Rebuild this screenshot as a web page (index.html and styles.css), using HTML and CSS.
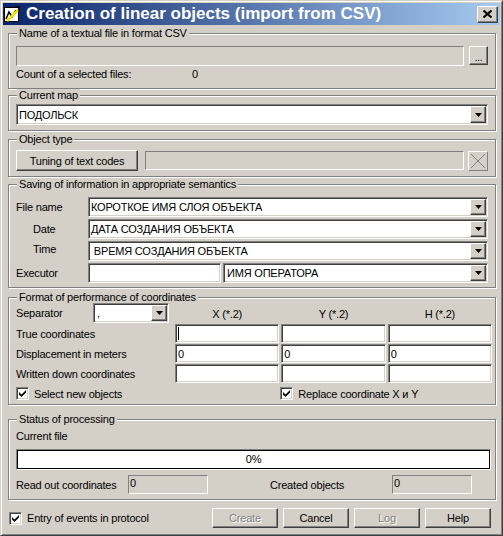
FILE: index.html
```html
<!DOCTYPE html>
<html>
<head>
<meta charset="utf-8">
<link rel="stylesheet" href="styles.css">
</head>
<body>
<div class="window">
  <div class="titlebar">
    <svg class="app-icon" width="16" height="16" viewBox="0 0 16 16">
      <rect x="0.5" y="1.5" width="14" height="14" fill="#fff" stroke="#000"/>
      <path d="M2 13 L5 6 L8 11 L12 4" fill="none" stroke="#000" stroke-width="1.5"/>
      <path d="M3 15 L15 3" fill="none" stroke="#f0e000" stroke-width="2.5"/>
      <path d="M11 1 L15 1 L15 5" fill="none" stroke="#000" stroke-width="1.5"/>
    </svg>
    <span class="title">Creation of linear objects (import from CSV)</span>
    <div class="close raised">
      <svg width="9" height="8" viewBox="0 0 9 8"><path d="M0.5 0.5 L8.5 7.5 M8.5 0.5 L0.5 7.5" stroke="#000" stroke-width="2"/></svg>
    </div>
  </div>

  <div class="client">
    <fieldset class="group g-file">
      <legend>Name of a textual file in format CSV</legend>
      <div class="file-row">
        <div class="field disabled grow"></div>
        <div class="raised browse">...</div>
      </div>
      <div class="count-row"><span class="count-label">Count of a selected files:</span><span>0</span></div>
    </fieldset>

    <fieldset class="group g-map">
      <legend>Current map</legend>
      <div class="combo tall">
        <span class="combo-text">ПОДОЛЬСК</span>
        <span class="arrow raised"><svg width="7" height="4" viewBox="0 0 7 4"><path d="M0 0H7L3.5 4Z" fill="#000"/></svg></span>
      </div>
    </fieldset>

    <fieldset class="group g-type">
      <legend>Object type</legend>
      <div class="type-row">
        <div class="raised button tuning">Tuning of text codes</div>
        <div class="field disabled grow type-field"></div>
        <div class="xbtn"><svg width="18" height="18" viewBox="0 0 18 18"><path d="M2 2 L16 16 M16 2 L2 16" stroke="#808080" stroke-width="1"/></svg></div>
      </div>
    </fieldset>

    <fieldset class="group g-sem">
      <legend>Saving of information in appropriate semantics</legend>
      <div class="sem-grid">
        <span class="lbl">File name</span>
        <div class="combo">
          <span class="combo-text">КОРОТКОЕ ИМЯ СЛОЯ ОБЪЕКТА</span>
          <span class="arrow raised"><svg width="7" height="4" viewBox="0 0 7 4"><path d="M0 0H7L3.5 4Z" fill="#000"/></svg></span>
        </div>
        <span class="lbl ind">Date</span>
        <div class="combo">
          <span class="combo-text">ДАТА СОЗДАНИЯ ОБЪЕКТА</span>
          <span class="arrow raised"><svg width="7" height="4" viewBox="0 0 7 4"><path d="M0 0H7L3.5 4Z" fill="#000"/></svg></span>
        </div>
        <span class="lbl ind up">Time</span>
        <div class="combo">
          <span class="combo-text">&nbsp;ВРЕМЯ СОЗДАНИЯ ОБЪЕКТА</span>
          <span class="arrow raised"><svg width="7" height="4" viewBox="0 0 7 4"><path d="M0 0H7L3.5 4Z" fill="#000"/></svg></span>
        </div>
        <span class="lbl">Executor</span>
        <div class="exec">
          <div class="field white"></div>
          <div class="combo">
            <span class="combo-text pad">ИМЯ ОПЕРАТОРА</span>
            <span class="arrow raised"><svg width="7" height="4" viewBox="0 0 7 4"><path d="M0 0H7L3.5 4Z" fill="#000"/></svg></span>
          </div>
        </div>
      </div>
    </fieldset>

    <fieldset class="group g-coord">
      <legend>Format of performance of coordinates</legend>
      <div class="coord-grid">
        <div class="sep">
          <span class="sep-label">Separator</span>
          <div class="combo sep-combo">
            <span class="combo-text">,</span>
            <span class="arrow raised"><svg width="7" height="4" viewBox="0 0 7 4"><path d="M0 0H7L3.5 4Z" fill="#000"/></svg></span>
          </div>
        </div>
        <span class="head">X (*.2)</span>
        <span class="head">Y (*.2)</span>
        <span class="head">H (*.2)</span>

        <span class="rlbl">True coordinates</span>
        <div class="cell"><span class="caret"></span></div>
        <div class="cell"></div>
        <div class="cell"></div>

        <span class="rlbl">Displacement in meters</span>
        <div class="cell">0</div>
        <div class="cell">0</div>
        <div class="cell">0</div>

        <span class="rlbl">Written down coordinates</span>
        <div class="cell"></div>
        <div class="cell"></div>
        <div class="cell"></div>
      </div>
      <div class="checks">
        <label class="chk"><span class="box"><svg width="7" height="7" viewBox="0 0 7 7"><path d="M0 2 L2.5 4.5 L7 0 L7 2.5 L2.5 7 L0 4.5 Z" fill="#000"/></svg></span>Select new objects</label>
        <label class="chk replace"><span class="box"><svg width="7" height="7" viewBox="0 0 7 7"><path d="M0 2 L2.5 4.5 L7 0 L7 2.5 L2.5 7 L0 4.5 Z" fill="#000"/></svg></span>Replace coordinate X и Y</label>
      </div>
    </fieldset>

    <fieldset class="group g-status">
      <legend>Status of processing</legend>
      <div class="cur-file">Current file</div>
      <div class="progress">0%</div>
      <div class="stat-row">
        <span>Read out coordinates</span>
        <div class="field disabled num">0</div>
        <span></span>
        <span>Created objects</span>
        <div class="field disabled num">0</div>
      </div>
    </fieldset>

    <div class="footer">
      <label class="chk foot-chk"><span class="box"><svg width="7" height="7" viewBox="0 0 7 7"><path d="M0 2 L2.5 4.5 L7 0 L7 2.5 L2.5 7 L0 4.5 Z" fill="#000"/></svg></span>Entry of events in protocol</label>
      <div class="buttons">
        <div class="raised button wide off">Create</div>
        <div class="raised button wide">Cancel</div>
        <div class="raised button wide off">Log</div>
        <div class="raised button wide">Help</div>
      </div>
    </div>
  </div>
</div>
</body>
</html>
```

FILE: styles.css
```css
* { box-sizing: border-box; }
html, body { margin: 0; padding: 0; }
body {
  width: 503px; height: 536px; overflow: hidden;
  background: #d4d0c8; color: #000;
  font-family: "Liberation Sans", Arial, sans-serif;
  font-size: 11px; letter-spacing: -0.2px;
}
.window {
  width: 503px; height: 536px;
  background: #d4d0c8;
  border: 1px solid; border-color: #d4d0c8 #404040 #404040 #d4d0c8;
  box-shadow: inset 1px 1px #fff, inset -1px -1px #808080;
  padding: 2px;
  display: flex; flex-direction: column;
}
.titlebar {
  height: 22px; flex: none;
  display: flex; align-items: center;
  padding: 0 2px 0 1px;
  background: linear-gradient(to right, #0a246a, #a6caf0);
  color: #fff;
}
.app-icon { flex: none; }
.title {
  margin-left: 6px;
  font-weight: bold; font-size: 17px; letter-spacing: 0;
  white-space: nowrap;
}
.close {
  margin-left: auto;
  width: 21px; height: 17px;
  display: flex; align-items: center; justify-content: center;
}
.raised {
  background: #d4d0c8;
  border: 1px solid; border-color: #fff #404040 #404040 #fff;
  box-shadow: inset -1px -1px #808080;
}
.client {
  flex: 1;
  display: flex; flex-direction: column;
  padding: 0 4px 0 5px;
}
.group {
  margin: 0; padding: 0 7px;
  border: 1px solid #808080;
  box-shadow: inset 1px 1px #fff, 1px 1px #fff;
  min-inline-size: 0;
}
.group legend {
  margin-left: 1px; padding: 0 2px;
  height: 13px; line-height: 13px;
  background: #d4d0c8;
}
.g-file { margin-top: 2px; padding-bottom: 7px; }
.g-map { margin-top: 0; padding-bottom: 5px; }
.g-type { margin-top: 2px; padding-bottom: 5px; }
.g-sem { margin-top: 1px; padding-bottom: 4px; }
.g-coord { margin-top: 3px; padding-bottom: 4px; }
.g-status { margin-top: 8px; padding-bottom: 5px; }

.field {
  border: 1px solid; border-color: #808080 #fff #fff #808080;
}
.field.disabled { background: #d4d0c8; }
.field.white {
  background: #fff;
  box-shadow: inset 1px 1px #404040, inset -1px -1px #d4d0c8;
}
.grow { flex: 1; }

.file-row { display: flex; gap: 5px; margin-top: 6px; height: 20px; }
.browse {
  width: 19px; height: 19px;
  display: flex; align-items: flex-end; justify-content: center;
  line-height: 13px; font-size: 10px;
}
.count-row { margin-top: 2px; height: 13px; line-height: 13px; display: flex; }
.count-label { width: 176px; }

.combo {
  height: 20px;
  display: flex; align-items: stretch;
  padding: 1px;
  background: #fff;
  border: 1px solid; border-color: #808080 #fff #fff #808080;
  box-shadow: inset 1px 1px #404040, inset -1px -1px #d4d0c8;
}
.combo.tall { height: 21px; margin-top: 2px; }
.combo-text {
  flex: 1; padding-left: 1px;
  display: flex; align-items: center;
  white-space: nowrap; overflow: hidden;
}
.combo-text.pad { padding-left: 2px; }
.arrow {
  width: 16px; flex: none;
  display: flex; align-items: center; justify-content: center;
}

.type-row { display: flex; align-items: center; margin-top: 4px; height: 21px; }
.button {
  display: flex; align-items: center; justify-content: center;
  white-space: nowrap;
}
.tuning { width: 122px; height: 21px; }
.type-field { height: 19px; margin-left: 7px; }
.xbtn {
  width: 20px; height: 20px; margin-left: 4px;
  border: 1px solid; border-color: #fff #808080 #808080 #fff;
  display: flex; align-items: center; justify-content: center;
}

.sem-grid {
  margin-top: 6px;
  display: grid; grid-template-columns: 72px 1fr;
  grid-auto-rows: 20px; row-gap: 2px;
}
.lbl { display: flex; align-items: center; }
.lbl.ind { padding-left: 17px; }
.lbl.up { padding-bottom: 4px; }
.exec { display: grid; grid-template-columns: 133px 1fr; column-gap: 2px; }

.coord-grid {
  margin-top: -1px; margin-right: -4px;
  display: grid;
  grid-template-columns: 157px 1fr 1fr 1fr;
  grid-template-rows: 20px 19px 19px 19px;
  column-gap: 2px; row-gap: 1px;
}
.sep { display: flex; align-items: center; }
.sep-label { width: 77px; }
.sep-combo { width: 76px; height: 20px; }
.sep-combo .combo-text { padding-left: 2px; }
.head { display: flex; align-items: center; justify-content: center; padding-top: 1px; }
.rlbl { display: flex; align-items: center; }
.cell {
  background: #fff;
  border: 1px solid; border-color: #808080 #fff #fff #808080;
  box-shadow: inset 1px 1px #404040, inset -1px -1px #d4d0c8;
  padding-left: 2px;
  display: flex; align-items: center;
}
.caret { width: 1px; height: 13px; background: #000; }

.checks {
  margin-top: 4px; margin-right: -4px;
  display: grid; grid-template-columns: 157px 1fr 1fr 1fr; column-gap: 2px;
  height: 13px;
}
.chk { display: flex; align-items: center; gap: 5px; white-space: nowrap; height: 13px; }
.chk.replace { grid-column: 3 / span 2; margin-left: -1px; }
.box {
  width: 13px; height: 13px; flex: none;
  background: #fff;
  border: 1px solid; border-color: #808080 #fff #fff #808080;
  box-shadow: inset 1px 1px #404040, inset -1px -1px #d4d0c8;
  display: flex; align-items: center; justify-content: center;
}

.cur-file { margin-top: 4px; height: 13px; line-height: 13px; }
.progress {
  margin-top: 6px; margin-right: -3px;
  height: 21px; line-height: 19px; text-align: center;
  background: #fff;
  border: 1px solid; border-color: #808080 #fff #fff #808080;
  box-shadow: inset 0 0 0 1px #000;
}
.stat-row {
  margin-top: 5px; height: 19px;
  display: grid; grid-template-columns: 112px 80px 62px 122px 80px;
  align-items: center;
}
.num { height: 19px; padding-left: 1px; line-height: 15px; }

.footer {
  margin-top: 8px; margin-right: 5px;
  display: flex; align-items: center; height: 20px;
}
.foot-chk { margin-left: 1px; }
.buttons { margin-left: auto; display: flex; gap: 5px; }
.wide { width: 66px; height: 20px; }
.off { color: #808080; text-shadow: 1px 1px #fff; }
```
